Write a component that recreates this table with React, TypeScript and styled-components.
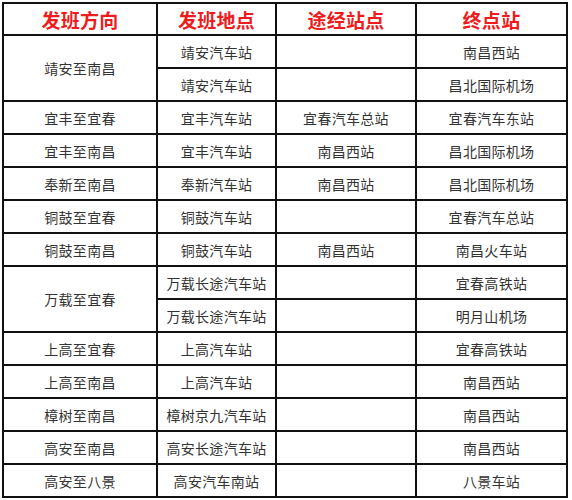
import React, { FC } from "react";
import styled, { createGlobalStyle } from "styled-components";

interface Route {
  readonly direction: string;
  readonly stops: ReadonlyArray<[string, string, string]>;
}

const ROUTES: Route[] = [
  {
    direction: "靖安至南昌",
    stops: [
      ["靖安汽车站", "", "南昌西站"],
      ["靖安汽车站", "", "昌北国际机场"],
    ],
  },
  { direction: "宜丰至宜春", stops: [["宜丰汽车站", "宜春汽车总站", "宜春汽车东站"]] },
  { direction: "宜丰至南昌", stops: [["宜丰汽车站", "南昌西站", "昌北国际机场"]] },
  { direction: "奉新至南昌", stops: [["奉新汽车站", "南昌西站", "昌北国际机场"]] },
  { direction: "铜鼓至宜春", stops: [["铜鼓汽车站", "", "宜春汽车总站"]] },
  { direction: "铜鼓至南昌", stops: [["铜鼓汽车站", "南昌西站", "南昌火车站"]] },
  {
    direction: "万载至宜春",
    stops: [
      ["万载长途汽车站", "", "宜春高铁站"],
      ["万载长途汽车站", "", "明月山机场"],
    ],
  },
  { direction: "上高至宜春", stops: [["上高汽车站", "", "宜春高铁站"]] },
  { direction: "上高至南昌", stops: [["上高汽车站", "", "南昌西站"]] },
  { direction: "樟树至南昌", stops: [["樟树京九汽车站", "", "南昌西站"]] },
  { direction: "高安至南昌", stops: [["高安长途汽车站", "", "南昌西站"]] },
  { direction: "高安至八景", stops: [["高安汽车南站", "", "八景车站"]] },
];

const HEADERS = ["发班方向", "发班地点", "途经站点", "终点站"];

const GlobalStyle = createGlobalStyle`
  html, body {
    margin: 0;
    padding: 0;
    background: #ffffff;
  }
`;

export default function App() {
  return (
    <>
      <GlobalStyle />
      <Page>
        <Schedule>
          {HEADERS.map((title) => (
            <HeadCell key={title}>{title}</HeadCell>
          ))}
          {ROUTES.map((route) => (
            <RouteRows key={route.direction} route={route} />
          ))}
        </Schedule>
      </Page>
    </>
  );
}

const RouteRows: FC<{ route: Route }> = ({ route }) => (
  <>
    <Cell $span={route.stops.length}>{route.direction}</Cell>
    {route.stops.map(([origin, via, end], i) => (
      <React.Fragment key={i}>
        <Cell>{origin}</Cell>
        <Cell>{via}</Cell>
        <Cell>{end}</Cell>
      </React.Fragment>
    ))}
  </>
);

const Page = styled.div`
  padding: 2px 0 0 2px;
`;

const Schedule = styled.div`
  display: grid;
  width: fit-content;
  grid-template-columns: 152px 117px 138px 149px;
  grid-template-rows: 30px repeat(14, 31px);
  gap: 2px;
  padding: 2px;
  background: #111111;
`;

const HeadCell = styled.div`
  display: flex;
  align-items: center;
  justify-content: center;
  background: #ffffff;
  color: #ee1c1c;
  font-family: "Noto Sans CJK SC", sans-serif;
  font-size: 19px;
  font-weight: 700;
  letter-spacing: 0.3px;
`;

const Cell = styled.div<{ $span?: number }>`
  display: flex;
  align-items: center;
  justify-content: center;
  grid-row: span ${({ $span }) => $span ?? 1};
  background: #ffffff;
  color: #333333;
  font-family: "Noto Sans CJK SC", sans-serif;
  font-size: 14px;
  letter-spacing: 0.3px;
`;
